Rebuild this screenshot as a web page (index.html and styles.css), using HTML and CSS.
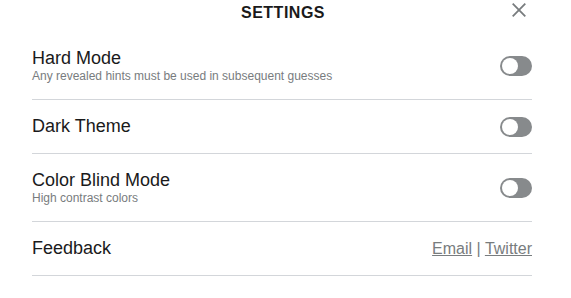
FILE: index.html
```html
<!DOCTYPE html>
<html>
<head>
<meta charset="utf-8">
<link rel="stylesheet" href="styles.css">
</head>
<body>
<div class="modal">
  <header class="header">
    <h1 class="heading">SETTINGS</h1>
    <button class="close" aria-label="Close">
      <svg width="14" height="14" viewBox="0 0 14 14"><path d="M0.7 0.7 L13.3 13.3 M13.3 0.7 L0.7 13.3" stroke="#787c7e" stroke-width="1.8" fill="none"/></svg>
    </button>
  </header>
  <section class="settings">
    <div class="setting">
      <div class="text">
        <div class="title">Hard Mode</div>
        <div class="description">Any revealed hints must be used in subsequent guesses</div>
      </div>
      <div class="switch"><span class="knob"></span></div>
    </div>
    <div class="setting">
      <div class="text">
        <div class="title">Dark Theme</div>
      </div>
      <div class="switch"><span class="knob"></span></div>
    </div>
    <div class="setting">
      <div class="text">
        <div class="title">Color Blind Mode</div>
        <div class="description">High contrast colors</div>
      </div>
      <div class="switch"><span class="knob"></span></div>
    </div>
    <div class="setting">
      <div class="text">
        <div class="title">Feedback</div>
      </div>
      <div class="links"><a href="#">Email</a> | <a href="#">Twitter</a></div>
    </div>
  </section>
</div>
</body>
</html>
```

FILE: styles.css
```css
* { box-sizing: border-box; }
html, body { margin: 0; padding: 0; background: #ffffff; }
body {
  font-family: "Liberation Sans", Arial, sans-serif;
  color: #1a1a1b;
}
.modal {
  width: 571px;
  padding: 0 39px 0 32px;
}
.header {
  position: relative;
  height: 32px;
  display: flex;
  align-items: flex-start;
  justify-content: center;
}
.heading {
  margin: 0;
  font-size: 16px;
  font-weight: 700;
  letter-spacing: 0.5px;
  line-height: 26px;
  text-transform: uppercase;
  padding-left: 2px;
}
.close {
  position: absolute;
  right: 6px;
  top: 3px;
  border: 0;
  background: none;
  padding: 0;
  width: 14px;
  height: 14px;
  cursor: pointer;
  display: flex;
}
.setting {
  display: flex;
  justify-content: space-between;
  align-items: center;
  border-bottom: 1px solid #d3d6da;
  padding: 16px 0;
}
.title {
  font-size: 18px;
  line-height: 21px;
}
.description {
  font-size: 12px;
  line-height: 14px;
  color: #787c7e;
}
.switch {
  width: 32px;
  height: 20px;
  border-radius: 999px;
  background: #878a8c;
  padding: 2px;
  display: flex;
}
.knob {
  width: 16px;
  height: 16px;
  border-radius: 50%;
  background: #ffffff;
}
.links {
  font-size: 16px;
  color: #787c7e;
}
.links a {
  color: #787c7e;
  text-decoration: underline;
}
```
